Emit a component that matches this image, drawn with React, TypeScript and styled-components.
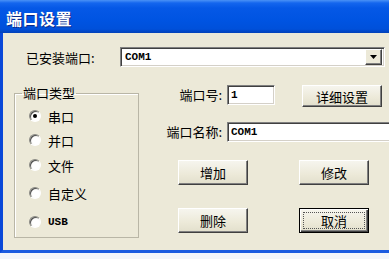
import React from "react";
import styled, { createGlobalStyle } from "styled-components";

interface RadioProps {
  gap?: number;
}

interface CheckProps {
  checked?: boolean;
}

interface TextProps {
  latin?: boolean;
}

interface ButtonProps {
  isDefault?: boolean;
}

const portTypes = [
  { label: "串口", gap: 0, checked: true },
  { label: "并口", gap: 4 },
  { label: "文件", gap: 5 },
  { label: "自定义", gap: 8 },
  { label: "USB", gap: 9, latin: true }
];

const App = () => {
  return (
    <>
      <GlobalStyle />
      <Window>
        <TitleBar>端口设置</TitleBar>
        <Body>
          <InstalledRow>
            <InstalledLabel>已安装端口:</InstalledLabel>
            <Combo>
              <ComboText>COM1</ComboText>
              <DropButton>
                <svg width="7" height="4" viewBox="0 0 7 4">
                  <path d="M0 0h7L3.5 4z" fill="#000" />
                </svg>
              </DropButton>
            </Combo>
          </InstalledRow>
          <Main>
            <GroupBox>
              <Legend>端口类型</Legend>
              <RadioList>
                {portTypes.map(item => (
                  <RadioRow key={item.label} gap={item.gap}>
                    <RadioCircle checked={item.checked} />
                    <RadioLabel latin={item.latin}>{item.label}</RadioLabel>
                  </RadioRow>
                ))}
              </RadioList>
            </GroupBox>
            <RightPanel>
              <FieldRow>
                <FieldLabel>端口号:</FieldLabel>
                <PortInput readOnly value="1" />
                <DetailButton>详细设置</DetailButton>
              </FieldRow>
              <FieldRow style={{ marginTop: 15 }}>
                <FieldLabel>端口名称:</FieldLabel>
                <NameInput readOnly value="COM1" />
              </FieldRow>
              <ButtonGrid>
                <Button>增加</Button>
                <Button>修改</Button>
                <Button>删除</Button>
                <Button isDefault>
                  <FocusRect>取消</FocusRect>
                </Button>
              </ButtonGrid>
            </RightPanel>
          </Main>
        </Body>
      </Window>
    </>
  );
};

const GlobalStyle = createGlobalStyle`
  html, body {
    margin: 0;
    padding: 0;
    background: #f3f5fb;
  }
  body {
    font-family: "Noto Sans CJK SC", sans-serif;
    font-size: 13px;
    color: #000;
  }
`;

const Window = styled.div`
  display: flex;
  flex-direction: column;
  width: 389px;
  height: 259px;
  overflow: hidden;
`;

const TitleBar = styled.div`
  align-items: center;
  background: linear-gradient(
    180deg,
    #4a92f6 0px,
    #1466ee 3px,
    #0558e6 8px,
    #0054e2 20px,
    #0050da 29px,
    #0342b8 33px
  );
  box-sizing: border-box;
  color: #fff;
  display: flex;
  flex-shrink: 0;
  font-size: 16px;
  font-weight: bold;
  height: 33px;
  letter-spacing: 0.5px;
  padding: 2px 0 0 6px;
  text-shadow: 1px 1px 0 #0b2a8a;
`;

const Body = styled.div`
  background: #ece9d8;
  border-bottom: 3px solid #1c5be0;
  border-left: 3px solid #0a48d8;
  box-sizing: border-box;
  display: flex;
  flex-direction: column;
  flex-shrink: 0;
  height: 220px;
  overflow: hidden;
  padding: 14px 4px 0 11px;
`;

const InstalledRow = styled.div`
  align-items: center;
  display: flex;
  height: 20px;
`;

const InstalledLabel = styled.div`
  flex-shrink: 0;
  margin-left: 12px;
  width: 94px;
`;

const Combo = styled.div`
  align-items: center;
  background: #fff;
  border-color: #808080 #fff #fff #808080;
  border-style: solid;
  border-width: 1px;
  box-shadow: inset 1px 1px 0 #404040, inset -1px -1px 0 #d4d0c8;
  box-sizing: border-box;
  display: flex;
  flex: 1;
  height: 20px;
  padding: 0 2px 0 4px;
`;

const ComboText = styled.span`
  flex: 1;
  font-family: "Liberation Mono", monospace;
  font-size: 11px;
  font-weight: bold;
`;

const DropButton = styled.div`
  align-items: center;
  background: #ece9d8;
  border-color: #fff #404040 #404040 #fff;
  border-style: solid;
  border-width: 1px;
  box-shadow: inset -1px -1px 0 #808080;
  box-sizing: border-box;
  display: flex;
  height: 16px;
  justify-content: center;
  width: 17px;
`;

const Main = styled.div`
  display: flex;
  margin-top: 18px;
`;

const GroupBox = styled.fieldset`
  border: 1px solid #b9b6a6;
  box-shadow: inset 1px 1px 0 #fff;
  box-sizing: border-box;
  flex-shrink: 0;
  margin: 1px 0 0 0;
  min-width: 0;
  padding: 0;
  width: 125px;
`;

const Legend = styled.legend`
  line-height: 14px;
  margin-left: 7px;
  padding: 0 1px;
`;

const RadioList = styled.div`
  padding: 6px 0 5px 14px;
`;

const RadioRow = styled.div<RadioProps>`
  align-items: center;
  display: flex;
  height: 20px;
  margin-top: ${props => props.gap || 0}px;
`;

const RadioCircle = styled.span<CheckProps>`
  align-items: center;
  background: radial-gradient(circle at 60% 60%, #fff 40%, #e6e4dc 100%);
  border-color: #8a8a84 #fff #fff #8a8a84;
  border-radius: 50%;
  border-style: solid;
  border-width: 1px;
  box-shadow: inset 1px 1px 0 #505050;
  box-sizing: border-box;
  display: flex;
  height: 12px;
  justify-content: center;
  width: 12px;

  &::after {
    background: #000;
    border-radius: 50%;
    content: "";
    display: ${props => (props.checked ? "block" : "none")};
    height: 4px;
    width: 4px;
  }
`;

const RadioLabel = styled.span<TextProps>`
  margin-left: 7px;
  ${props =>
    props.latin
      ? `
      font-family: "Liberation Mono", monospace;
      font-size: 11px;
      font-weight: bold;
    `
      : ``}
`;

const RightPanel = styled.div`
  display: flex;
  flex: 1;
  flex-direction: column;
  margin-left: 11px;
  min-width: 0;
`;

const FieldRow = styled.div`
  align-items: flex-start;
  display: flex;
`;

const FieldLabel = styled.div`
  flex-shrink: 0;
  line-height: 20px;
  margin-right: 5px;
  text-align: right;
  width: 72px;
`;

const TextInput = styled.input`
  background: #fff;
  border-color: #808080 #fff #fff #808080;
  border-style: solid;
  border-width: 1px;
  box-shadow: inset 1px 1px 0 #404040, inset -1px -1px 0 #d4d0c8;
  box-sizing: border-box;
  font-family: "Liberation Mono", monospace;
  font-size: 11px;
  font-weight: bold;
  height: 20px;
  margin: 0;
  outline: none;
  padding: 0 3px;
`;

const PortInput = styled(TextInput)`
  width: 48px;
`;

const NameInput = styled(TextInput)`
  flex: 1;
  margin-right: -12px;
  min-width: 0;
`;

const Button = styled.button<ButtonProps>`
  align-items: center;
  background: linear-gradient(180deg, #f6f5ee 0%, #ece9d8 60%, #e2dfcc 100%);
  border-color: ${props =>
    props.isDefault ? "#000" : "#fff #404040 #404040 #fff"};
  border-style: solid;
  border-width: 1px;
  box-shadow: ${props =>
    props.isDefault
      ? "inset 1px 1px 0 #fff, inset -1px -1px 0 #404040, inset -2px -2px 0 #808080"
      : "inset -1px -1px 0 #808080"};
  box-sizing: border-box;
  display: flex;
  font-family: "Noto Sans CJK SC", sans-serif;
  font-size: 13px;
  justify-content: center;
  margin: 0;
  padding: 0;
`;

const DetailButton = styled(Button)`
  height: 22px;
  margin-left: 27px;
  width: 80px;
`;

const ButtonGrid = styled.div`
  column-gap: 51px;
  display: grid;
  grid-template-columns: 70px 70px;
  grid-auto-rows: 25px;
  margin-top: 18px;
  padding-left: 28px;
  row-gap: 23px;
`;

const FocusRect = styled.span`
  align-items: center;
  align-self: stretch;
  border: 1px dotted #555;
  display: flex;
  flex: 1;
  justify-content: center;
  margin: 3px;
`;

export default App;
